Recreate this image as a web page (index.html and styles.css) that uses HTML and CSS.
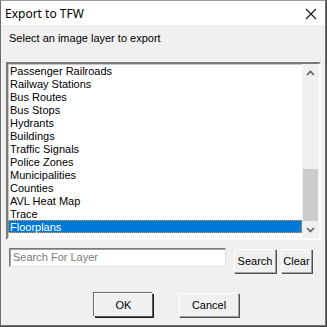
FILE: index.html
```html
<!DOCTYPE html>
<html>
<head>
<meta charset="utf-8">
<link rel="stylesheet" href="styles.css">
</head>
<body>
<div class="window">
  <div class="titlebar">
    <span class="title">Export to TFW</span>
    <svg class="close" width="12" height="12" viewBox="0 0 12 12"><path d="M1 1 L11 11 M11 1 L1 11" stroke="#111" stroke-width="1.1" fill="none"/></svg>
  </div>
  <div class="client">
    <div class="prompt">Select an image layer to export</div>
    <div class="listbox">
      <ul class="items">
        <li>Passenger Railroads</li>
        <li>Railway Stations</li>
        <li>Bus Routes</li>
        <li>Bus Stops</li>
        <li>Hydrants</li>
        <li>Buildings</li>
        <li>Traffic Signals</li>
        <li>Police Zones</li>
        <li>Municipalities</li>
        <li>Counties</li>
        <li>AVL Heat Map</li>
        <li>Trace</li>
        <li class="selected">Floorplans</li>
      </ul>
      <div class="scrollbar">
        <div class="arrow"><svg width="9" height="6" viewBox="0 0 9 6"><path d="M1 5 L4.5 1.5 L8 5" stroke="#606060" stroke-width="1.6" fill="none"/></svg></div>
        <div class="track"><div class="thumb"></div></div>
        <div class="arrow"><svg width="9" height="6" viewBox="0 0 9 6"><path d="M1 1 L4.5 4.5 L8 1" stroke="#606060" stroke-width="1.6" fill="none"/></svg></div>
      </div>
    </div>
    <div class="searchrow">
      <div class="input">Search For Layer</div>
      <div class="btn search">Search</div>
      <div class="btn clear">Clear</div>
    </div>
    <div class="actions">
      <div class="btn ok">OK</div>
      <div class="btn cancel">Cancel</div>
    </div>
  </div>
</div>
</body>
</html>
```
FILE: styles.css
```css
html, body {
  margin: 0;
  padding: 0;
  background: #4a4a4a;
}
body {
  width: 327px;
  height: 327px;
  overflow: hidden;
}
.window {
  width: 324px;
  height: 324px;
  border: 1px solid #6f6f6f;
  border-top-color: #9a9a9a;
  background: #f0f0f0;
  font-family: "Liberation Sans", Arial, sans-serif;
  font-size: 11px;
  color: #000;
}
.titlebar {
  height: 24px;
  background: #fff;
  display: flex;
  align-items: center;
  justify-content: space-between;
  padding: 0 8px 0 4px;
}
.title {
  font-family: "Noto Sans", "Liberation Sans", sans-serif;
  font-size: 12px;
  margin-top: 1px;
}
.close {
  margin-top: 1px;
}
.prompt {
  margin: 7px 0 0 8px;
  height: 13px;
  line-height: 13px;
}
.listbox {
  margin: 17px 0 0 5px;
  width: 311px;
  height: 174px;
  border-style: solid;
  border-width: 2px;
  border-color: #7a7a7a #fdfdfd #fdfdfd #7a7a7a;
  box-shadow: inset 1px 1px 0 #c8c8c8;
  background: #fff;
  display: flex;
}
.items {
  list-style: none;
  margin: 0;
  padding: 0;
  flex: 1;
}
.items li {
  height: 13px;
  line-height: 14px;
  padding-left: 2px;
  white-space: nowrap;
}
.items li.selected {
  background: #0078d7;
  color: #fff;
  outline: 1px dotted #f0a030;
  outline-offset: -1px;
}
.scrollbar {
  width: 17px;
  background: #f0f0f0;
  display: flex;
  flex-direction: column;
}
.arrow {
  height: 17px;
  display: flex;
  align-items: center;
  justify-content: center;
}
.track {
  flex: 1;
  display: flex;
  flex-direction: column;
  justify-content: flex-end;
}
.thumb {
  height: 52px;
  margin: 0 1px;
  background: #cdcdcd;
}
.searchrow {
  display: flex;
  align-items: flex-start;
  margin: 8px 0 0 8px;
}
.input {
  width: 212px;
  height: 17px;
  line-height: 17px;
  padding-left: 3px;
  background: #fff;
  color: #7a7a7a;
  border-style: solid;
  border-width: 1px;
  border-color: #7a7a7a #e0e0e0 #e0e0e0 #7a7a7a;
  box-shadow: inset 1px 1px 0 #a0a0a0;
}
.btn {
  box-sizing: border-box;
  height: 24px;
  display: flex;
  align-items: center;
  justify-content: center;
  background: #f0f0f0;
  border-style: solid;
  border-width: 1px;
  border-color: #fff #a0a0a0 #a0a0a0 #fff;
  box-shadow: 1px 1px 0 #505050;
  font-size: 11px;
}
.search {
  width: 42px;
  margin-left: 8px;
  margin-top: 1px;
}
.clear {
  width: 31px;
  margin-left: 5px;
  margin-top: 1px;
}
.actions {
  display: flex;
  margin: 20px 0 0 93px;
}
.ok {
  width: 59px;
  border-color: #fff #5a5a5a #5a5a5a #fff;
  box-shadow: 1px 1px 0 #1a1a1a, -1px -1px 0 #6a6a6a;
}
.cancel {
  width: 60px;
  margin-left: 26px;
}
```
